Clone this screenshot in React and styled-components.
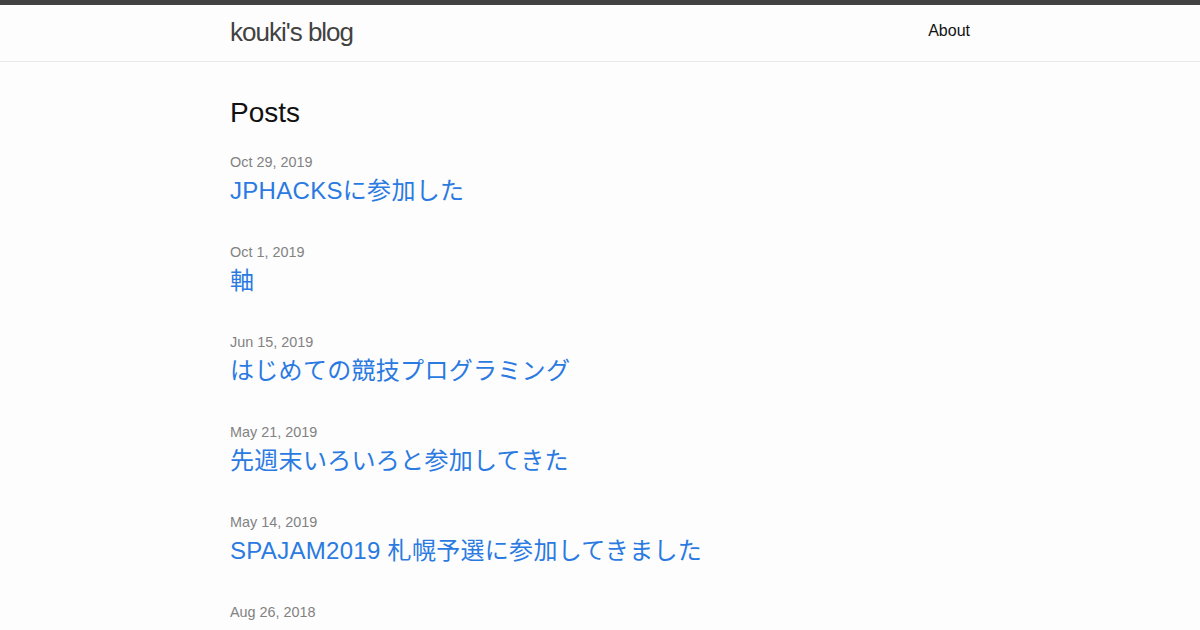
import styled, { createGlobalStyle } from "styled-components";

const GlobalStyle = createGlobalStyle`
  html, body {
    margin: 0;
    padding: 0;
  }
  body {
    background: #fdfdfd;
    color: #111;
    font: 400 16px/1.5 "Liberation Sans", "Noto Sans CJK JP", sans-serif;
  }
`;

const Header = styled.header`
  border-top: 5px solid #424242;
  border-bottom: 1px solid #e8e8e8;
  min-height: 56px;
`;

const Wrapper = styled.div`
  max-width: 740px;
  margin: 0 auto;
  padding: 0 30px;
`;

const HeaderRow = styled(Wrapper)`
  display: flex;
  justify-content: space-between;
  align-items: center;
  height: 54px;
`;

const SiteTitle = styled.a`
  font-size: 26px;
  font-weight: 300;
  letter-spacing: -1px;
  line-height: 54px;
  color: #424242;
  text-decoration: none;
`;

const NavLink = styled.a`
  color: #111;
  line-height: 52px;
  padding-bottom: 2px;
  text-decoration: none;
`;

const Main = styled.main`
  padding: 30px 0;
`;

const Heading = styled.h1`
  font-size: 28px;
  font-weight: 400;
  line-height: 42px;
  margin: 0 0 17px;
`;

const PostList = styled.ul`
  list-style: none;
  margin: 0;
  padding: 0;
`;

const PostItem = styled.li`
  margin-bottom: 32px;
`;

const Meta = styled.span`
  display: block;
  font-size: 14.4px;
  line-height: 22px;
  color: #828282;
`;

const PostTitle = styled.h3`
  margin: 0;
  font-weight: 400;
`;

const PostLink = styled.a`
  display: block;
  font-size: 24px;
  line-height: 36px;
  letter-spacing: 0.3px;
  color: #2a7ae2;
  text-decoration: none;
`;

// the last entry's title falls below the fold in the screenshot
const posts = [
  { date: "Oct 29, 2019", title: "JPHACKSに参加した" },
  { date: "Oct 1, 2019", title: "軸" },
  { date: "Jun 15, 2019", title: "はじめての競技プログラミング" },
  { date: "May 21, 2019", title: "先週末いろいろと参加してきた" },
  { date: "May 14, 2019", title: "SPAJAM2019 札幌予選に参加してきました" },
  { date: "Aug 26, 2018", title: null },
];

export default function App() {
  return (
    <>
      <GlobalStyle />
      <Header>
        <HeaderRow>
          <SiteTitle href="#">kouki's blog</SiteTitle>
          <NavLink href="#">About</NavLink>
        </HeaderRow>
      </Header>
      <Main>
        <Wrapper>
          <Heading>Posts</Heading>
          <PostList>
            {posts.map((p) => (
              <PostItem key={p.date}>
                <Meta>{p.date}</Meta>
                {p.title && (
                  <PostTitle>
                    <PostLink href="#">{p.title}</PostLink>
                  </PostTitle>
                )}
              </PostItem>
            ))}
          </PostList>
        </Wrapper>
      </Main>
    </>
  );
}
